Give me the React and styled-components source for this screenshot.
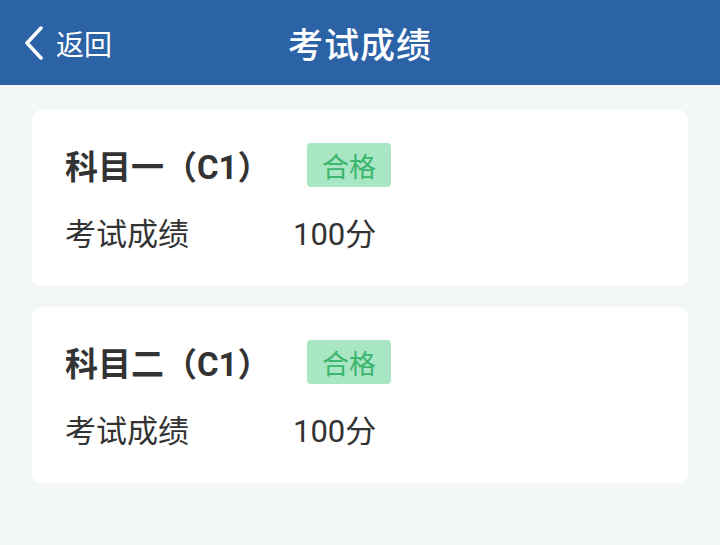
import styled, { createGlobalStyle } from "styled-components";

const GlobalStyle = createGlobalStyle`
  html, body {
    margin: 0;
    padding: 0;
    background-color: #f3f7f8;
  }
  body {
    font-family: Roboto, "Noto Sans CJK SC", sans-serif;
  }
`;

const Page = styled.div`
  width: 720px;
  height: 545px;
  background-color: #f3f7f8;
  overflow: hidden;
`;

const Header = styled.header`
  position: relative;
  display: flex;
  align-items: center;
  justify-content: center;
  height: 85px;
  background-color: #2c63a7;
  color: #fff;
`;

const Back = styled.div`
  position: absolute;
  left: 22px;
  top: 0;
  bottom: 0;
  display: flex;
  align-items: center;
  gap: 10px;
  font-size: 28px;
`;

const Title = styled.h1`
  margin: 0;
  font-size: 35px;
  font-weight: 500;
  letter-spacing: 1px;
`;

const List = styled.div`
  display: flex;
  flex-direction: column;
  gap: 21px;
  padding: 25px 32px;
`;

const Card = styled.div`
  display: flex;
  flex-direction: column;
  gap: 22px;
  padding: 33px 33px 37px;
  background-color: #fff;
  border-radius: 9px;
`;

const TitleRow = styled.div`
  display: flex;
  align-items: center;
  height: 44px;
`;

const Subject = styled.div`
  width: 242px;
  font-size: 33px;
  font-weight: 700;
  color: #333;
`;

const Badge = styled.span`
  display: inline-flex;
  align-items: center;
  height: 44px;
  padding: 0 15px;
  border-radius: 4px;
  background-color: #a9e6c3;
  color: #3cb56f;
  font-size: 27px;
`;

const Row = styled.div`
  display: grid;
  grid-template-columns: 228px auto;
  align-items: center;
  height: 40px;
  font-size: 31px;
  color: #333;
`;

const results = [
  { subject: "科目一（C1）", status: "合格", score: "100分" },
  { subject: "科目二（C1）", status: "合格", score: "100分" },
];

const App = () => {
  return (
    <Page>
      <GlobalStyle />
      <Header>
        <Back>
          <svg width="24" height="34" viewBox="0 0 24 34">
            <path
              d="M19 2 L5 17 L19 32"
              fill="none"
              stroke="#fff"
              strokeWidth="3.5"
              strokeLinecap="round"
              strokeLinejoin="round"
            />
          </svg>
          <span>返回</span>
        </Back>
        <Title>考试成绩</Title>
      </Header>
      <List>
        {results.map((r) => (
          <Card key={r.subject}>
            <TitleRow>
              <Subject>{r.subject}</Subject>
              <Badge>{r.status}</Badge>
            </TitleRow>
            <Row>
              <span>考试成绩</span>
              <span>{r.score}</span>
            </Row>
          </Card>
        ))}
      </List>
    </Page>
  );
};

export default App;
